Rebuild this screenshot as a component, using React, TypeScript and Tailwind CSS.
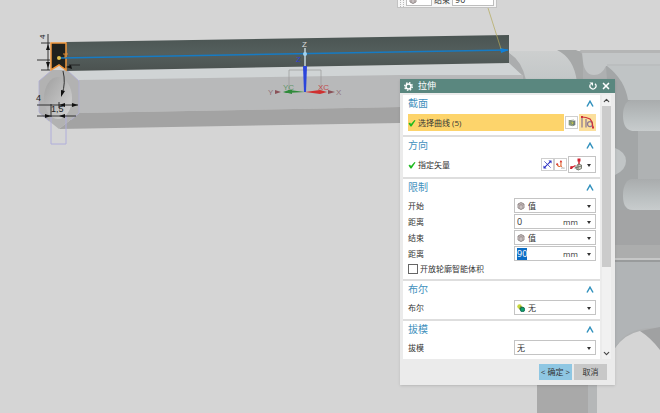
import { useEffect, useRef, useState, type ReactNode } from "react"
import { ChevronDown, ChevronUp, X } from "lucide-react"

type SelectFieldProps = {
  label: string
  options: string[]
  icon?: ReactNode
}

type DistanceFieldProps = {
  label: string
  initial: string
  selected?: boolean
}

const Caret = () => (
  <svg viewBox="0 0 4 3" className="pointer-events-none absolute right-1 top-1/2 -mt-px h-[3px] w-1">
    <path d="M0 0h4L2 3z" fill="#333" />
  </svg>
)

const GearIcon = () => (
  <svg viewBox="0 0 18 18" className="h-[9px] w-[9px] shrink-0">
    <circle cx="9" cy="9" r="7.500" fill="none" stroke="#fff" strokeWidth="3" strokeDasharray="3 2.890" />
    <circle cx="9" cy="9" r="5" fill="none" stroke="#fff" strokeWidth="3" />
  </svg>
)

const ResetIcon = () => (
  <svg viewBox="0 0 16 16" className="h-2 w-2">
    <path d="M12 3.500a6 6 0 1 1-9 1" fill="none" stroke="#fff" strokeWidth="2.500" />
    <path d="M1 1h7v7z" fill="#fff" />
  </svg>
)

const TickIcon = () => (
  <svg viewBox="0 0 16 16" className="h-2 w-2 shrink-0">
    <path d="M1 9l3-2 2 3 7-8 2 1-8 12H5z" fill="#1fba1f" />
  </svg>
)

const SectionArrow = () => (
  <svg viewBox="0 0 16 14" className="h-[7px] w-2">
    <path d="M2 13L8 2.500 14 13" fill="none" stroke="#3191bd" strokeWidth="3" />
  </svg>
)

const CubeIcon = () => (
  <svg viewBox="0 0 16 16" className="h-2 w-2 shrink-0">
    <path d="M8 1l6 3v8l-6 3-6-3V4z" fill="#dcd6d6" stroke="#756c6c" strokeWidth="1.500" />
    <path d="M2 4l6 3 6-3M8 7v8M5 3l6 3v7M11 2.500L5 6v7" fill="none" stroke="#8a7d7d" strokeWidth="1" />
  </svg>
)

const BooleanIcon = () => (
  <svg viewBox="0 0 16 16" className="h-2 w-2 shrink-0">
    <circle cx="5" cy="5" r="4.500" fill="#c6d63c" />
    <path d="M7 4l7 3-3 8-7-5z" fill="#6d8b2c" />
    <circle cx="11" cy="11" r="4.500" fill="#11a06c" stroke="#0a5a4a" strokeWidth="1.500" />
  </svg>
)

const SketchIcon = () => (
  <svg viewBox="0 0 24 24" className="h-2 w-2">
    <path d="M2 3l12 2v17L2 19z" fill="#8a9a7c" />
    <path d="M14 7l8-3v14l-8 4z" fill="#6f7d80" />
    <path d="M4 5l14-2M8 8l10 1-3 9-5-5z" fill="#c4ca4a" stroke="#76806a" strokeWidth="2" />
  </svg>
)

const CurveIcon = () => (
  <svg viewBox="0 0 30 30" className="h-[15px] w-[15px]">
    <path d="M4 3v22M12 8v17" fill="none" stroke="#8b7a92" strokeWidth="2.500" />
    <circle cx="20" cy="18" r="5" fill="none" stroke="#8b7a92" strokeWidth="2.500" />
    <path d="M4 4l8 1 8 3 4 6 2 11" fill="none" stroke="#cf3038" strokeWidth="2.500" />
    <path d="M2 2h4v4H2zM24 23h4v4h-4z" fill="#cf3038" />
  </svg>
)

const ReverseIcon = () => (
  <svg viewBox="0 0 20 20" className="h-[9px] w-[9px]">
    <path d="M3 3l14 14" stroke="#5457c8" strokeWidth="2" />
    <path d="M17 3L3 17" stroke="#2b2fc4" strokeWidth="2.500" />
    <path d="M12 1h7v7zM1 12v7h7z" fill="#2b2fc4" />
  </svg>
)

const VectorDialogIcon = () => (
  <svg viewBox="0 0 20 20" className="h-[9px] w-[9px]">
    <path d="M11 4v9q-6 4-9-4" fill="none" stroke="#e0642e" strokeWidth="2.500" />
    <path d="M8 5l3-5 3 5zM0 11l2-5 4 4z" fill="#d8322e" />
    <path d="M11 13l3 3" stroke="#e0642e" strokeWidth="2" />
    <path d="M12 18h7" stroke="#777" strokeWidth="2" strokeDasharray="2 1" />
  </svg>
)

const InferredVectorIcon = () => (
  <svg viewBox="0 0 28 26" className="h-[13px] w-[14px]">
    <path d="M2 20l9-5" stroke="#cf2330" strokeWidth="2.500" />
    <path d="M1 16l6 1-3 5H0z" fill="#cf2330" />
    <path d="M18 14V4" stroke="#cf2330" strokeWidth="3" />
    <path d="M15 1h6v6h-6z" fill="#cf2330" />
    <path d="M12 17l5-5 6 2v7l-6 3-5-2z" fill="#d2d4c8" stroke="#5d6257" strokeWidth="1.500" />
    <path d="M16 12v12M9 20l14-4" stroke="#5d6257" strokeWidth="1.500" />
  </svg>
)

const Section = ({ title, children }: { title: string; children: ReactNode }) => {
  const [open, setOpen] = useState(true)

  return (
    <section className="bg-white pl-[5px] pr-1 pb-1">
      <h2>
        <button
          type="button"
          aria-expanded={open}
          onClick={() => setOpen(!open)}
          className="flex h-4 w-full items-center justify-between pr-[2px] text-[10px] leading-4 text-[#4391bd]"
        >
          {title}
          <SectionArrow />
        </button>
      </h2>
      {open && <div className="flex flex-col gap-px pt-[3px]">{children}</div>}
    </section>
  )
}

const SelectField = ({ label, options, icon }: SelectFieldProps) => (
  <label className="flex h-[15px] items-center justify-between">
    {label}
    <span className="relative flex h-full w-[82px] items-center gap-[3px] border border-[#c4c4c4] bg-white pl-[2px]">
      {icon}
      <select className="h-full min-w-0 flex-1 appearance-none bg-transparent outline-none">
        {options.map((option) => (
          <option key={option}>{option}</option>
        ))}
      </select>
      <Caret />
    </span>
  </label>
)

const DistanceField = ({ label, initial, selected }: DistanceFieldProps) => {
  const [value, setValue] = useState(initial)
  const inputRef = useRef<HTMLInputElement>(null)

  useEffect(() => {
    if (selected) {
      inputRef.current?.focus()
      inputRef.current?.select()
    }
  }, [selected])

  return (
    <div className="flex h-[15px] items-center justify-between">
      <span>{label}</span>
      <span className="relative flex h-full w-[82px] items-center border border-[#c4c4c4] bg-white pl-[2px]">
        <input
          ref={inputRef}
          aria-label={label}
          value={value}
          onChange={(e) => setValue(e.target.value)}
          className="min-w-0 flex-1 bg-transparent text-[9px] leading-3 outline-none selection:bg-[#0b6cc4] selection:text-white"
        />
        <select
          aria-label="mm"
          className="h-full w-8 appearance-none bg-transparent text-[8px] outline-none"
        >
          <option>mm</option>
        </select>
        <Caret />
      </span>
    </div>
  )
}

const ExtrudeDialog = () => (
  <form
    onSubmit={(e) => e.preventDefault()}
    className="absolute left-[400px] top-[79px] w-[215px] bg-[#ebebeb] text-[8px] leading-3 text-[#333] shadow-sm"
  >
    <header className="flex h-[14px] items-center bg-[#5a877f] px-1 text-white">
      <GearIcon />
      <h1 className="ml-[5px] mr-auto text-[9px] leading-[14px]">拉伸</h1>
      <button type="button" aria-label="重置" className="mr-1">
        <ResetIcon />
      </button>
      <button type="button" aria-label="关闭">
        <X size={10} strokeWidth={4} />
      </button>
    </header>

    <div className="flex pl-[3px] pr-1 pt-[2px]">
      <div className="flex min-w-0 flex-1 flex-col gap-[2px] bg-[#dedede]">
        <Section title="截面">
          <div className="flex h-[17px] items-center gap-px">
            <div className="flex h-full flex-1 items-center gap-[2px] bg-[#fdd46b]">
              <TickIcon />
              选择曲线 (5)
            </div>
            <button
              type="button"
              aria-label="绘制截面"
              className="flex h-[13px] w-[13px] items-center justify-center border border-[#cfcfcf] bg-white"
            >
              <SketchIcon />
            </button>
            <button
              type="button"
              aria-label="曲线"
              className="flex h-full w-[17px] items-center justify-center bg-[#fbdf9c]"
            >
              <CurveIcon />
            </button>
          </div>
        </Section>

        <Section title="方向">
          <div className="flex h-[17px] items-center">
            <div className="mr-auto flex items-center gap-[2px]">
              <TickIcon />
              指定矢量
            </div>
            <button
              type="button"
              aria-label="反向"
              className="flex h-[13px] w-[13px] items-center justify-center border border-[#cfcfcf]"
            >
              <ReverseIcon />
            </button>
            <button
              type="button"
              aria-label="矢量对话框"
              className="mr-px flex h-[13px] w-[13px] items-center justify-center border border-[#cfcfcf]"
            >
              <VectorDialogIcon />
            </button>
            <button
              type="button"
              aria-label="自动判断的矢量"
              className="relative flex h-full w-7 items-center border border-[#c4c4c4] pl-px"
            >
              <InferredVectorIcon />
              <Caret />
            </button>
          </div>
        </Section>

        <Section title="限制">
          <SelectField label="开始" options={["值"]} icon={<CubeIcon />} />
          <DistanceField label="距离" initial="0" />
          <SelectField label="结束" options={["值"]} icon={<CubeIcon />} />
          <DistanceField label="距离" initial="90" selected />
          <label className="flex h-[13px] items-center gap-[2px]">
            <input
              type="checkbox"
              className="h-[10px] w-[10px] appearance-none border border-[#666] bg-white checked:bg-[#3191bd]"
            />
            开放轮廓智能体积
          </label>
        </Section>

        <Section title="布尔">
          <SelectField label="布尔" options={["无"]} icon={<BooleanIcon />} />
        </Section>

        <Section title="拔模">
          <SelectField label="拔模" options={["无"]} />
        </Section>
      </div>

      <div className="ml-[2px] flex w-[9px] flex-col items-center bg-[#f1f1f1] text-[#444]">
        <ChevronUp size={9} strokeWidth={3} className="my-px shrink-0" />
        <div className="w-full grow-2 bg-[#cbcbcb]" />
        <div className="grow" />
        <ChevronDown size={9} strokeWidth={3} className="my-px shrink-0" />
      </div>
    </div>

    <footer className="flex justify-end gap-[2px] px-2 pb-[5px] pt-[5px]">
      <button type="submit" className="h-4 w-[33px] bg-[#8fc7e3] whitespace-nowrap">
        &lt; 确定 &gt;
      </button>
      <button type="button" className="h-4 w-[33px] bg-[#c8c8c8]">
        取消
      </button>
    </footer>
  </form>
)

const EndLimitBar = () => (
  <div className="absolute -top-2 left-[397px] flex h-4 w-[100px] items-center gap-[2px] border border-[#c2c2c2] bg-[#f6f6f6] px-[2px] text-[8px] leading-3 text-[#333]">
    <div className="h-full w-1 border-x border-dotted border-[#bbb]" />
    <button
      type="button"
      aria-label="值"
      className="flex h-3 w-[26px] items-center border border-[#bdbdbd] bg-white pl-[2px]"
    >
      <CubeIcon />
    </button>
    <label htmlFor="end-limit" className="whitespace-nowrap">
      结束
    </label>
    <input
      id="end-limit"
      defaultValue="90"
      className="h-3 min-w-0 flex-1 border border-[#bdbdbd] bg-white pl-[2px] text-[9px] outline-none"
    />
  </div>
)

const Model = () => (
  <svg
    viewBox="0 0 660 413"
    preserveAspectRatio="xMinYMin slice"
    className="absolute inset-0 h-full w-full"
    fontFamily="Liberation Sans, sans-serif"
  >
    <defs>
      <linearGradient id="flute" x1="0" y1="0" x2="0" y2="1">
        <stop offset="0" stopColor="#a9acad" />
        <stop offset="0.6" stopColor="#bbc0c1" />
        <stop offset="1" stopColor="#c8cccd" />
      </linearGradient>
      <linearGradient id="band" x1="0" y1="0" x2="0" y2="1">
        <stop offset="0" stopColor="#4a5452" />
        <stop offset="0.5" stopColor="#545f5d" />
        <stop offset="1" stopColor="#4b5250" />
      </linearGradient>
      <linearGradient id="collar" x1="0" y1="0" x2="0" y2="1">
        <stop offset="0" stopColor="#cdcfcf" />
        <stop offset="1" stopColor="#bfc4c5" />
      </linearGradient>
      <linearGradient id="bore" x1="0" y1="0" x2="1" y2="1">
        <stop offset="0" stopColor="#9f9f9f" />
        <stop offset="1" stopColor="#d6d6d6" />
      </linearGradient>
    </defs>

    {/* receiver and cylinder */}
    <path d="M500 51h160v279l-20 1q-15 3-25 17H500z" fill="#aeb0b1" />
    <path d="M509 51h51q17 8 20 40h-54q-3-28-17-38z" fill="url(#collar)" />
    <path d="M509 53q13 8 17 27h-8q0-7-9-10z" fill="#abadae" />
    <path d="M557 50h19q7 2 7 10v22h-6q-3-24-20-32z" fill="#a6a8a8" />
    <path d="M582 52h78v14h-54q-4 9-12 9-9 0-11-13z" fill="#c3c6c7" />
    <path d="M580 50h80v3h-78z" fill="#b4b5b5" />
    <path d="M606 66l54 0v190h-45V80h-8z" fill="#a3a6a7" />
    <path d="M607 66h53v34h-32q-3-20-21-34z" fill="#c0c4c5" />
    <path d="M607 65h53" stroke="#adb0b1" strokeWidth="0.700" />
    <path d="M660 100v31h-26c-10 0-11-10-11-16s2-14 8-15z" fill="url(#flute)" />
    <path d="M638 131h22v48h-22z" fill="#afb2b3" />
    <path d="M615 148q11 4 11 13t-11 14z" fill="#c1c5c6" />
    <path d="M660 179v31h-27c-9 0-10-8-10-15s2-14 8-16z" fill="url(#flute)" />
    <path d="M615 210h45v35h-45z" fill="#a3a4a5" />
    <path d="M615 245h45v13h-45z" fill="#acadad" />
    <path d="M615 258h45v2h-45z" fill="#c6c7c7" />
    <path d="M615 260h45v2h-45z" fill="#999b9c" />
    <path d="M615 262h45v66q-33-2-45 20z" fill="#b1b4b6" />
    <path d="M640 331l20-4v23q-9-12-20-19z" fill="#a0a1a2" />
    <path d="M537 380h51v33h-51z" fill="#a9a9a9" />
    <path d="M588 380h9v33h-9z" fill="#b5b7b8" />

    {/* barrel */}
    <path d="M62 70l447-7 14 13-123 0-321 4z" fill="#d0d4d5" />
    <path d="M79 80l321-5h123v32H400l-321 6z" fill="#b8b9ba" />
    <path d="M79 113l321-6h20v16h-20l-341 6z" fill="#a3a3a3" />
    <path d="M52 70h15l12 11v32l-20 16-20-16V81z" fill="#b2b2b2" />
    <path d="M52 70L39 81v31l10 9M67 70l12 11v32l-8 7" fill="none" stroke="#aeadd6" strokeWidth="0.800" />
    <ellipse cx="58" cy="98" rx="14" ry="21" fill="url(#bore)" />
    <path d="M51 115v29h15v-29" fill="none" stroke="#b0aedb" />

    {/* extruded rib */}
    <path d="M66 42l443-7v28L66 71z" fill="url(#band)" />
    <path d="M51 43h15v27l-7-5-8 5z" fill="#20211d" stroke="#f0963c" strokeWidth="1.500" />
    <path d="M60 58l448-8" stroke="#167bc4" strokeWidth="1.500" />
    <path d="M500 48l9 2-8 3z" fill="#0f80d8" />
    <path d="M488 8l13 41" stroke="#b3a95a" strokeWidth="0.700" />
    <circle cx="59" cy="58" r="2" fill="#e0c04e" />
    <path d="M63 54h5M65 54v4" stroke="#d88b37" />

    {/* sketch dimensions */}
    <g fill="none" stroke="#222" strokeWidth="0.900">
      <path d="M48 34v36M41 43h9M37 60h13M41 70h9M63 71q3 12-1 23M37 105h41M37 116h39M51 104v13M59 102v6M69 65h11" />
    </g>
    <path
      d="M48 44l-2 6h4zM48 68l-2-6h4zM61 97l0-7 4 1zM59 105l6-2v4zM78 105l-6-2v4zM51 116l-6-2v4zM59 116l6-2v4zM66 67l5-2 1 4z"
      fill="#111"
    />
    <text x="36" y="101" fontSize="9" fill="#222">4</text>
    <text x="51" y="112" fontSize="9" fill="#222">1,5</text>
    <text x="45" y="39" fontSize="8" fill="#222" transform="rotate(-90 45 39)">4</text>

    {/* coordinate system */}
    <path d="M289 92V70h32v22" fill="none" stroke="#999" strokeWidth="0.700" />
    <path d="M305 48v20" stroke="#c4d4da" strokeWidth="1.500" />
    <path d="M303 66h4l-1 26h-2z" fill="#2b45dc" />
    <circle cx="305" cy="54" r="2" fill="#9fd2ef" />
    <path d="M305 92l-19 1-3-1 6-2zM284 92l8-2v4z" fill="#2f8a3a" />
    <path d="M305 92l15-2 7 2-7 2z" fill="#cf3030" />
    <path d="M281 92l-6-2v4zM328 90l7 2-7 2z" fill="#8a5158" />
    <g fontSize="8">
      <text x="302" y="47" fill="#dcdcdc">Z</text>
      <text x="296" y="62" fill="#2d3fd6">Z</text>
      <text x="268" y="95" fill="#92747a">Y</text>
      <text x="336" y="95" fill="#92747a">X</text>
      <text x="283" y="90" fill="#64976a">YC</text>
      <text x="318" y="90" fill="#c04b4b">XC</text>
    </g>
  </svg>
)

export default function App() {
  return (
    <main
      lang="zh-CN"
      className="relative min-h-screen w-full overflow-hidden bg-[#d5d5d5] font-['Open_Sans','Noto_Sans_CJK_SC',sans-serif]"
    >
      <Model />
      <EndLimitBar />
      <ExtrudeDialog />
    </main>
  )
}
